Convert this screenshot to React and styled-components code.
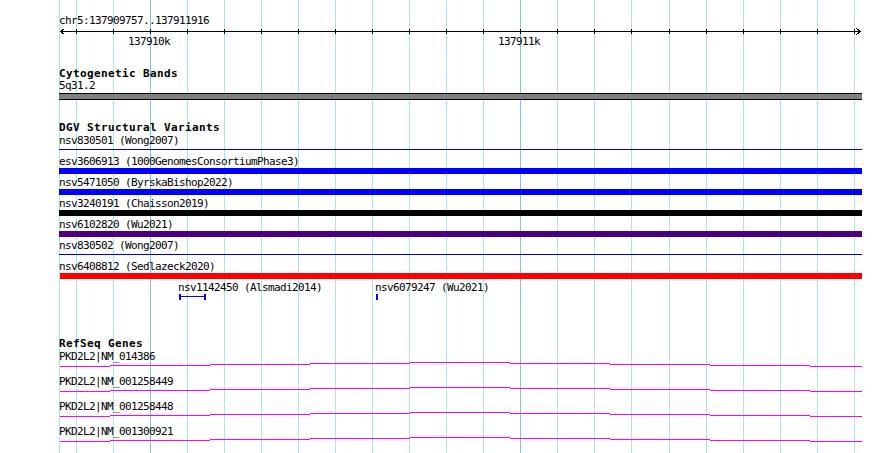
import React from 'react'
import styled, { createGlobalStyle } from 'styled-components'

const GlobalStyle = createGlobalStyle`
  html, body {
    margin: 0;
    padding: 0;
    background: #fff;
  }
  body {
    font-family: "DejaVu Sans Mono", "Liberation Mono", monospace;
    color: #000;
  }
`

// pixel x of every 100bp grid line (137910k and 137911k are the majors)
const GRID = [76, 113, 150, 187, 224, 261, 298, 335, 372, 409, 446, 483, 520, 557, 594, 631, 669, 706, 743, 780, 817, 854]
const MAJOR = [150, 520]
const LEFT = 59
const TRACK_W = 803

const variants = [
  { name: 'nsv830501 (Wong2007)', color: '#0000cc', thin: true },
  { name: 'esv3606913 (1000GenomesConsortiumPhase3)', color: '#0000ff' },
  { name: 'nsv5471050 (ByrskaBishop2022)', color: '#0000ff' },
  { name: 'nsv3240191 (Chaisson2019)', color: '#000000' },
  { name: 'nsv6102820 (Wu2021)', color: '#4b0082' },
  { name: 'nsv830502 (Wong2007)', color: '#0000cc', thin: true },
  { name: 'nsv6408812 (Sedlazeck2020)', color: '#ff0000', inset: 1 },
]

const genes = ['PKD2L2|NM_014386', 'PKD2L2|NM_001258449', 'PKD2L2|NM_001258448', 'PKD2L2|NM_001300921']

// stepped backbone of the transcripts: [start, end, y]
const backbone = [
  [60, 110, 6], [110, 210, 5], [210, 310, 4], [310, 410, 3], [410, 510, 2],
  [510, 610, 3], [610, 710, 4], [710, 810, 5], [810, 862, 6],
]

const Page = styled.div`
  position: relative;
  width: 890px;
  height: 453px;
  overflow: hidden;
  background: #fff;
`

const GridLayer = styled.svg`
  position: absolute;
  top: 0;
  left: 0;
  z-index: 0;
`

const Content = styled.div`
  position: relative;
  z-index: 1;
  display: flex;
  flex-direction: column;
  margin-left: ${LEFT}px;
  width: ${TRACK_W}px;
`

const Ruler = styled.div`
  display: flex;
  flex-direction: column;
  margin-top: 14px;
`

const Label = styled.div`
  font-size: 11px;
  letter-spacing: -0.62px;
  line-height: 13px;
  height: 13px;
  white-space: nowrap;
  margin-top: ${props => props.$shift || 0}px;
`

const TickRow = styled.div`
  position: relative;
  height: 13px;
`

const TickLabel = styled(Label)`
  position: absolute;
  top: 0;
`

const Section = styled.section`
  display: flex;
  flex-direction: column;
  margin-top: ${props => props.$gap}px;
`

const Title = styled.div`
  font-weight: bold;
  font-size: 11px;
  letter-spacing: 0.38px;
  line-height: 13px;
  height: 13px;
  white-space: nowrap;
`

const Band = styled.div`
  margin-top: 1px;
  height: 5px;
  background: #808080;
  border-top: 1px solid #000;
  border-bottom: 1px solid #000;
`

const VariantRow = styled.div`
  display: flex;
  flex-direction: column;
  height: 21px;
`

const Bar = styled.div`
  height: ${props => (props.$thin ? 1 : 6)}px;
  margin-top: ${props => (props.$thin ? 2 : 0)}px;
  margin-left: ${props => props.$inset || 0}px;
  background: ${props => props.color};
`

const FreeRow = styled.div`
  position: relative;
  height: 21px;
`

const FeatureLabel = styled(Label)`
  position: absolute;
  top: 0;
`

const FeatureMark = styled.svg`
  position: absolute;
  top: 13px;
`

const GeneRow = styled.div`
  display: flex;
  flex-direction: column;
  height: 25px;
`

const Backbone = styled.svg`
  display: block;
  margin-top: -3px;
`

const Scale = () => (
  <svg width={TRACK_W} height={8} shapeRendering='crispEdges' style={{ display: 'block' }}>
    <rect x={1} y={4} width={801} height={1} fill='#000' />
    {GRID.map(x => (
      <rect key={x} x={x - LEFT} y={2} width={1} height={5} fill='#000' />
    ))}
    <path d='M5.5 1.5 L1.5 4.5 L5.5 7.5' stroke='#000' fill='none' />
    <path d='M797.5 1.5 L801.5 4.5 L797.5 7.5' stroke='#000' fill='none' />
  </svg>
)

const App = () => (
  <Page>
    <GlobalStyle />
    <GridLayer width={890} height={453} shapeRendering='crispEdges'>
      <rect x={LEFT} y={0} width={1} height={453} fill='#aae6ee' />
      {GRID.map(x => (
        <rect key={x} x={x} y={0} width={1} height={453} fill={MAJOR.includes(x) ? '#80c4ec' : '#aae6ee'} />
      ))}
    </GridLayer>

    <Content>
      <Ruler>
        <Label>chr5:137909757..137911916</Label>
        <Scale />
        <TickRow>
          <TickLabel style={{ left: 69 }}>137910k</TickLabel>
          <TickLabel style={{ left: 439 }}>137911k</TickLabel>
        </TickRow>
      </Ruler>

      <Section $gap={19}>
        <Title>Cytogenetic Bands</Title>
        <Label $shift={-1}>5q31.2</Label>
        <Band />
      </Section>

      <Section $gap={21}>
        <Title>DGV Structural Variants</Title>
        {variants.map(v => (
          <VariantRow key={v.name}>
            <Label>{v.name}</Label>
            <Bar color={v.color} $thin={v.thin} $inset={v.inset} />
          </VariantRow>
        ))}
        <FreeRow>
          <FeatureLabel style={{ left: 119 }}>nsv1142450 (Alsmadi2014)</FeatureLabel>
          <FeatureMark width={27} height={6} shapeRendering='crispEdges' style={{ left: 120 }}>
            <rect x={0} y={0} width={2} height={6} fill='#0000ff' />
            <rect x={0} y={2} width={27} height={1} fill='#0000ff' />
            <rect x={25} y={0} width={2} height={6} fill='#0000ff' />
          </FeatureMark>
          <FeatureLabel style={{ left: 316 }}>nsv6079247 (Wu2021)</FeatureLabel>
          <FeatureMark width={2} height={6} shapeRendering='crispEdges' style={{ left: 317 }}>
            <rect x={0} y={0} width={2} height={6} fill='#0000ff' />
          </FeatureMark>
        </FreeRow>
      </Section>

      <Section $gap={35}>
        <Title>RefSeq Genes</Title>
        {genes.map(g => (
          <GeneRow key={g}>
            <Label>{g}</Label>
            <Backbone width={TRACK_W} height={12} shapeRendering='crispEdges'>
              {backbone.map(([a, b, y]) => (
                <rect key={a} x={a - LEFT} y={y} width={b - a} height={1} fill='#ff00ff' />
              ))}
            </Backbone>
          </GeneRow>
        ))}
      </Section>
    </Content>
  </Page>
)

export default App
